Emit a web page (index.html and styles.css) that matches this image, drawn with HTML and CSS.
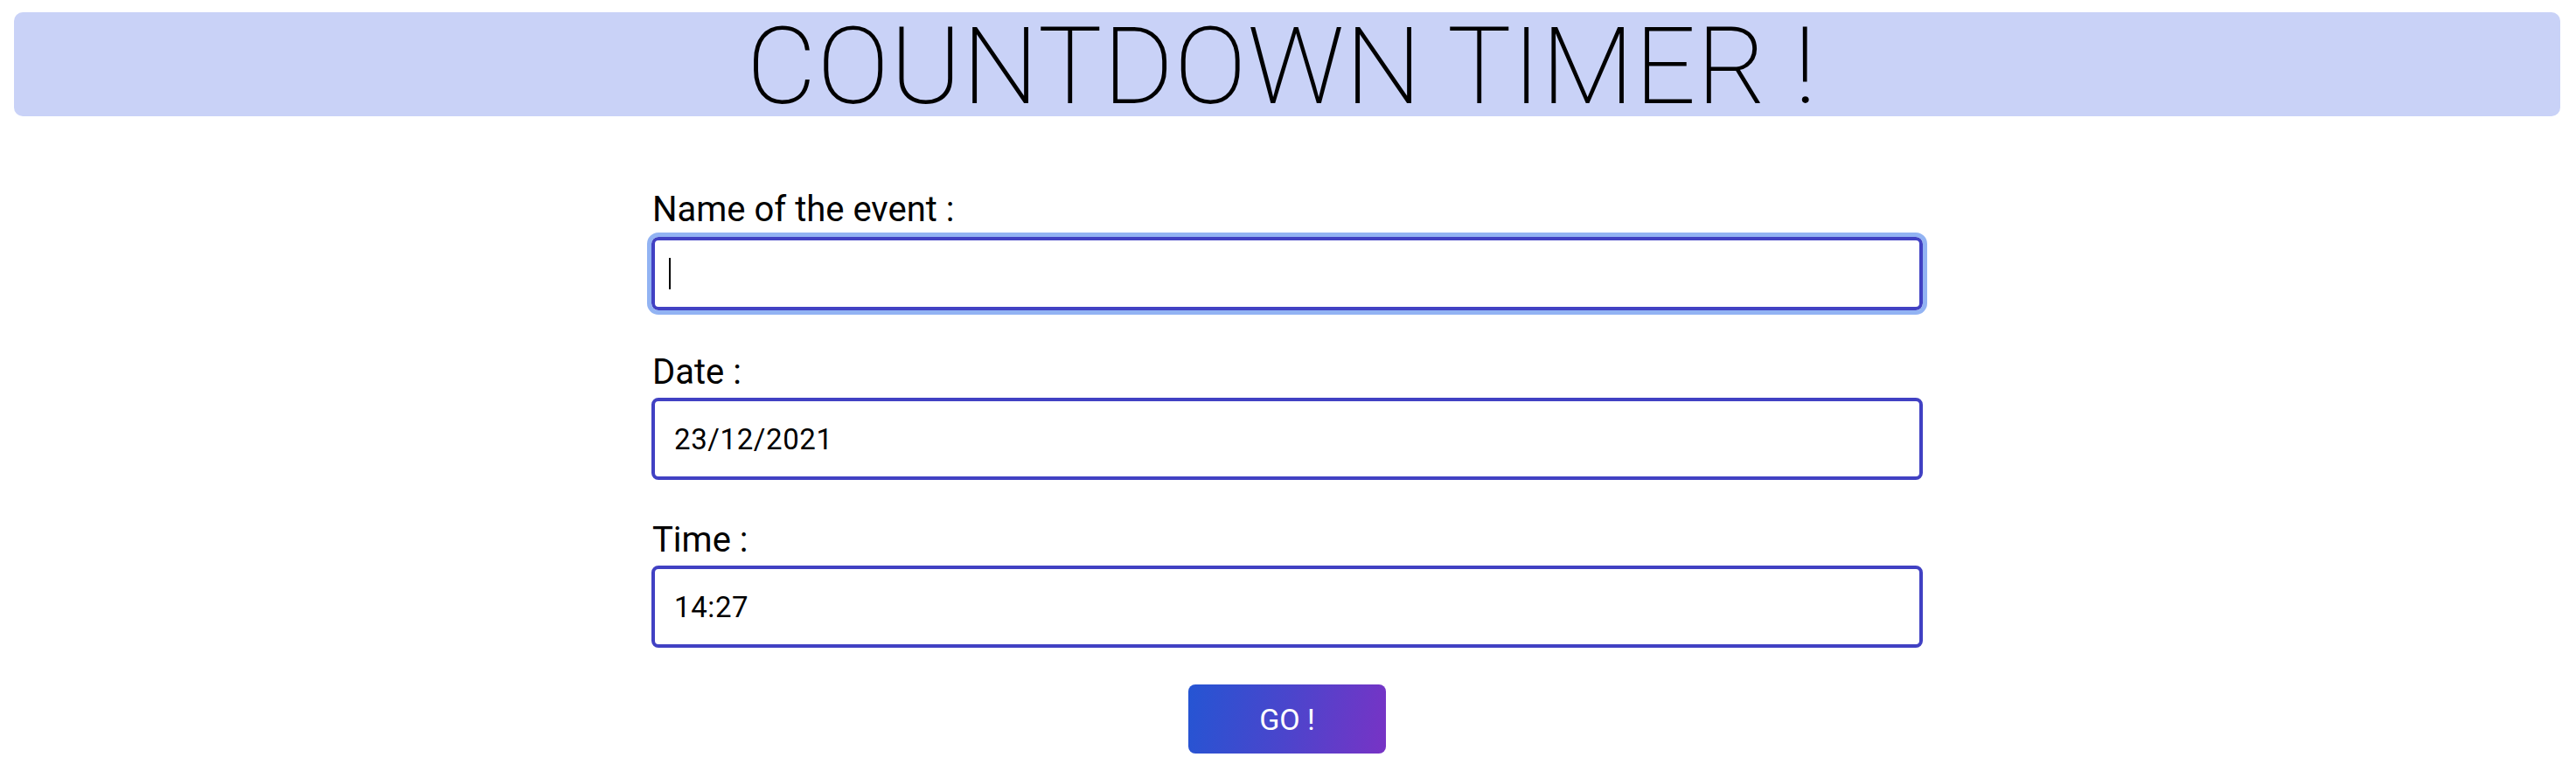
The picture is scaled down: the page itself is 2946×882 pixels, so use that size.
FILE: index.html
```html
<!DOCTYPE html>
<html lang="en">
<head>
<meta charset="utf-8">
<title>Countdown Timer</title>
<link rel="stylesheet" href="styles.css">
</head>
<body>
<header class="banner">
  <h1 class="title">COUNTDOWN TIMER !</h1>
</header>
<main class="page">
  <form class="form">
    <div class="field field-name">
      <label class="label">Name of the event :</label>
      <div class="input input-text is-focused"><span class="caret"></span></div>
    </div>
    <div class="field">
      <label class="label">Date :</label>
      <div class="input input-tall"><span class="value">23/12/2021</span></div>
    </div>
    <div class="field">
      <label class="label">Time :</label>
      <div class="input input-tall"><span class="value">14:27</span></div>
    </div>
    <div class="actions">
      <button type="button" class="go">GO !</button>
    </div>
  </form>
</main>
</body>
</html>
```

FILE: styles.css
```css
html, body {
  background: #ffffff;
}

body {
  margin: 14px 18px 0 16px;
  font-family: Roboto, "Noto Sans", sans-serif;
  color: #000000;
}

.banner {
  background: #c9d2f7;
  border-radius: 10px;
  height: 119px;
  display: flex;
  align-items: center;
  justify-content: center;
}

.title {
  margin: 0;
  font-family: Roboto, sans-serif;
  font-weight: 200;
  font-size: 123px;
  line-height: 119px;
  letter-spacing: 1px;
  padding-top: 5px;
  padding-right: 12px;
}

.page {
  display: flex;
  justify-content: center;
  padding-top: 83px;
}

.form {
  width: 1454px;
  display: flex;
  flex-direction: column;
  gap: 45px;
}

.field {
  display: flex;
  flex-direction: column;
  gap: 6px;
}

.field-name {
  gap: 8px;
  margin-bottom: 2px;
}

.label {
  font-family: Roboto, sans-serif;
  font-size: 40px;
  line-height: 47px;
  padding-left: 1px;
}

.input {
  box-sizing: border-box;
  border: 4px solid #4141c3;
  border-radius: 8px;
  background: #ffffff;
  display: flex;
  align-items: center;
  padding-left: 22px;
}

.input-text {
  height: 84px;
}

.input-tall {
  height: 94px;
}

.is-focused {
  outline: 5px solid #92b3f3;
  outline-offset: 0;
  border-radius: 8px;
  padding-left: 16px;
}

.caret {
  display: block;
  width: 2px;
  height: 36px;
  background: #000000;
}

.value {
  font-family: Roboto, sans-serif;
  font-size: 33px;
  letter-spacing: 0.6px;
}

.actions {
  display: flex;
  justify-content: center;
  margin-top: -3px;
}

.go {
  width: 226px;
  height: 79px;
  border: none;
  border-radius: 8px;
  background: linear-gradient(100deg, #2555d3 0%, #4b45cc 50%, #7833c5 100%);
  color: #ffffff;
  font-family: Roboto, sans-serif;
  font-size: 34px;
  font-weight: 400;
  cursor: pointer;
}
```
